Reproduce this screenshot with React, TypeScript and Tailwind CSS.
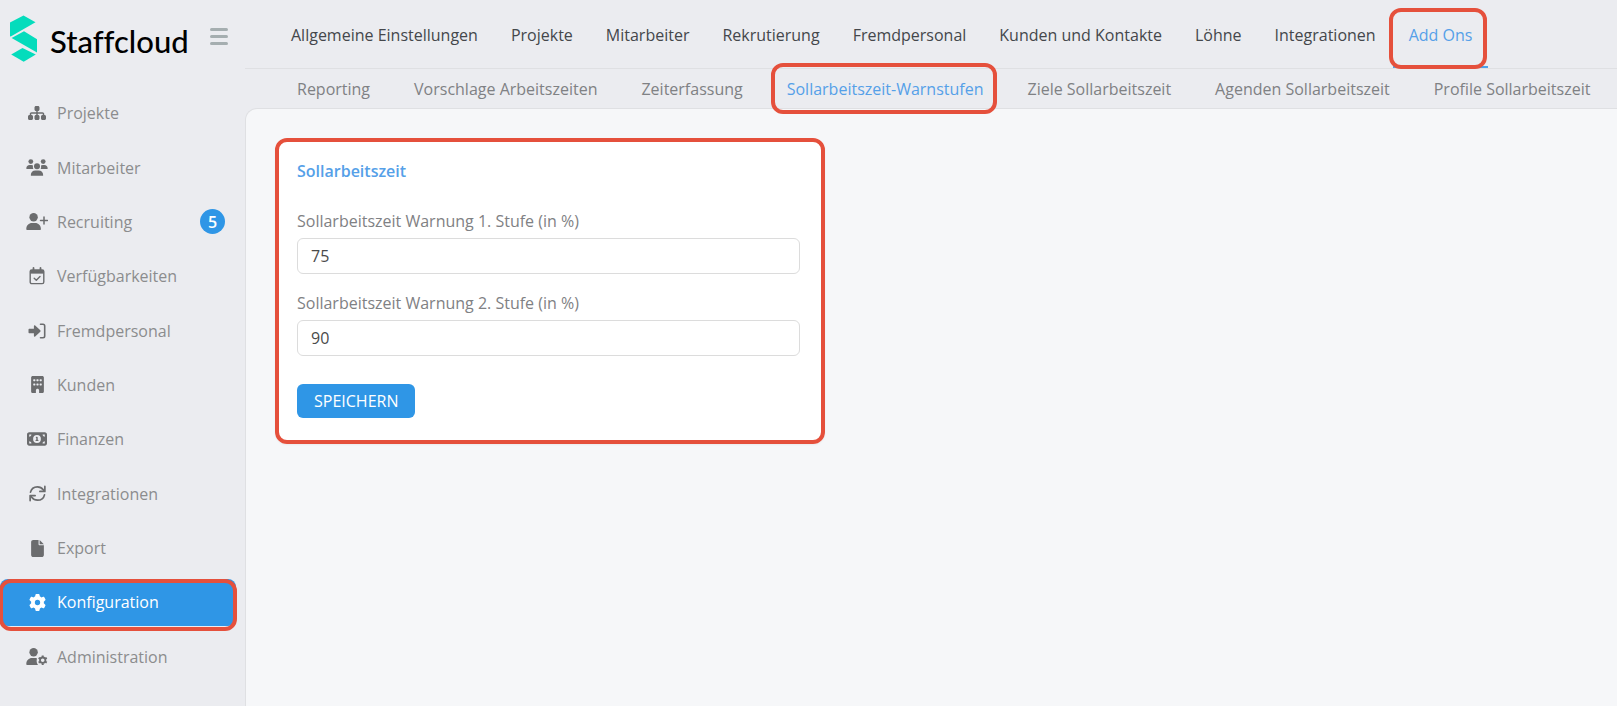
import type { ReactNode } from "react";
import type { IconType } from "react-icons";
import { FaSitemap, FaBuilding, FaMoneyBill1, FaFile, FaGear } from "react-icons/fa6";

type IconProps = { className?: string };

function UsersIcon({ className }: IconProps) {
  return (
    <svg viewBox="0 0 22 17" className={className} fill="currentColor">
      <circle cx="4.8" cy="2.600" r="2.400" />
      <circle cx="17.200" cy="2.600" r="2.400" />
      <circle cx="11" cy="7.200" r="3" />
      <path d="M.3 9.600C.3 7.400 1.700 6 3.700 6h1.600c.7 0 1.300.2 1.700.5-.3 1.100-.2 2.200.3 3.400H.7c-.3 0-.4-.1-.4-.3z" />
      <path d="M21.700 9.600c0-2.200-1.400-3.600-3.400-3.600h-1.600c-.7 0-1.300.2-1.700.5.3 1.100.2 2.200-.3 3.400h6.600c.3 0 .4-.1.4-.3z" />
      <path d="M4.800 16.200c0-2.900 1.900-4.700 4.600-4.700h3.200c2.700 0 4.600 1.800 4.600 4.700 0 .4-.3.6-.7.600h-11c-.4 0-.7-.2-.7-.6z" />
    </svg>
  );
}

function UserPlusIcon({ className }: IconProps) {
  return (
    <svg viewBox="0 0 22 17" className={className} fill="currentColor">
      <circle cx="7.600" cy="4.200" r="4.200" />
      <path d="M.3 16c0-3.500 2.500-5.900 5.800-5.900h3c3.300 0 5.800 2.400 5.800 5.900 0 .6-.4 1-1 1H1.300c-.6 0-1-.4-1-1z" />
      <path d="M18 4v7M14.500 7.500h7" stroke="currentColor" strokeWidth="1.500" strokeLinecap="round" />
    </svg>
  );
}

function UserGearIcon({ className }: IconProps) {
  return (
    <svg viewBox="0 0 22 17" className={className} fill="currentColor">
      <circle cx="7.600" cy="4.200" r="4.200" />
      <path d="M.3 16c0-3.500 2.500-5.900 5.800-5.900h3c.7 0 1.300.1 1.900.3-.7 2.400-.4 4.700 1 6.600H1.300c-.6 0-1-.4-1-1z" />
      <circle cx="16.700" cy="12.200" r="2.700" fill="none" stroke="currentColor" strokeWidth="1.800" />
      <path
        d="M16.700 7.500v1.600M16.700 15.300v1.600M12.630 9.850l1.400.8M19.370 13.750l1.400.8M12.630 14.550l1.400-.8M19.370 10.650l1.400-.8"
        stroke="currentColor"
        strokeWidth="2"
      />
    </svg>
  );
}

function CalendarIcon({ className }: IconProps) {
  return (
    <svg viewBox="0 0 16 18" className={className} fill="none" stroke="currentColor">
      <path d="M4.500 1v3M11.500 1v3" strokeWidth="1.800" strokeLinecap="round" />
      <rect x="1.200" y="3" width="13.600" height="13.600" rx="1.600" strokeWidth="1.400" />
      <path d="M1.500 3.500h13v2.600h-13z" fill="currentColor" strokeWidth="1" />
      <path d="M5.200 11.200l2.100 2L11 9.500" strokeWidth="1.400" strokeLinecap="round" strokeLinejoin="round" />
    </svg>
  );
}

function EnterIcon({ className }: IconProps) {
  return (
    <svg viewBox="0 0 18 16" className={className} fill="currentColor">
      <path d="M7.200 2.600l5.100 4.700c.4.400.4 1 0 1.400l-5.100 4.700c-.5.500-1.300.2-1.300-.5V10.200H1.500c-.6 0-1-.4-1-1V6.800c0-.6.4-1 1-1h4.400V3.100c0-.7.8-1 1.300-.5z" />
      <path
        d="M12.500 1.200H15c1 0 1.700.7 1.700 1.700v10.200c0 1-.7 1.700-1.700 1.700h-2.500"
        fill="none"
        stroke="currentColor"
        strokeWidth="1.600"
        strokeLinecap="round"
      />
    </svg>
  );
}

function SyncIcon({ className }: IconProps) {
  return (
    <svg
      viewBox="0 0 18 18"
      className={className}
      fill="none"
      stroke="currentColor"
      strokeWidth="1.800"
      strokeLinecap="round"
      strokeLinejoin="round"
    >
      <path d="M1.600 7.600C2.400 4.200 5.300 1.900 8.900 1.900c2.500 0 4.700 1.100 6.200 3.100l1 1.500" />
      <path d="M16.800 1.500v5.300h-5.300" />
      <path d="M16.400 10.400c-.8 3.400-3.700 5.700-7.300 5.700-2.500 0-4.700-1.100-6.200-3.100l-1-1.500" />
      <path d="M1.200 16.500v-5.300h5.300" />
    </svg>
  );
}

type MenuItem = {
  label: string;
  icon: IconType | typeof SyncIcon;
  size: string;
  badge?: number;
  active?: boolean;
};

const menu: MenuItem[] = [
  { label: "Projekte", icon: FaSitemap, size: "h-4 w-5" },
  { label: "Mitarbeiter", icon: UsersIcon, size: "h-[17px] w-[22px]" },
  { label: "Recruiting", icon: UserPlusIcon, size: "h-[17px] w-[22px]", badge: 5 },
  { label: "Verfügbarkeiten", icon: CalendarIcon, size: "h-[18px] w-4" },
  { label: "Fremdpersonal", icon: EnterIcon, size: "h-4 w-[18px]" },
  { label: "Kunden", icon: FaBuilding, size: "h-[17px] w-[17px]" },
  { label: "Finanzen", icon: FaMoneyBill1, size: "h-[18px] w-5" },
  { label: "Integrationen", icon: SyncIcon, size: "h-[17px] w-[17px]" },
  { label: "Export", icon: FaFile, size: "h-[17px] w-[17px]" },
  { label: "Konfiguration", icon: FaGear, size: "h-[17px] w-[17px]", active: true },
  { label: "Administration", icon: UserGearIcon, size: "h-[17px] w-[22px]" },
];

const tabs = [
  "Allgemeine Einstellungen",
  "Projekte",
  "Mitarbeiter",
  "Rekrutierung",
  "Fremdpersonal",
  "Kunden und Kontakte",
  "Löhne",
  "Integrationen",
  "Add Ons",
];

const subTabs = [
  "Reporting",
  "Vorschlage Arbeitszeiten",
  "Zeiterfassung",
  "Sollarbeitszeit-Warnstufen",
  "Ziele Sollarbeitszeit",
  "Agenden Sollarbeitszeit",
  "Profile Sollarbeitszeit",
];

// Red frame laid over the element it points out
function Marker({ className }: { className: string }) {
  return (
    <span
      className={`pointer-events-none absolute z-10 rounded-xl border-4 border-[#e5503c] ${className}`}
    />
  );
}

function Logo() {
  return (
    <a href="#" className="flex items-center gap-3">
      <svg viewBox="0 0 28 48" className="h-12 w-7" fill="#04dcbc">
        <path d="M0 7.500L13.500.6l12 6.600L1.200 21.300 0 21.500z" />
        <path d="M1.600 22.900L14 16.200l13 8v13.300z" />
        <path d="M1.200 39.500L12.500 33l13.300 6.500L13.700 46.700z" />
      </svg>
      <span className="pt-1 font-[Lato,sans-serif] text-[31px] leading-8 font-medium text-black [font-variant-ligatures:none]">
        Staffcloud
      </span>
    </a>
  );
}

function Sidebar() {
  return (
    <aside className="flex w-[245px] shrink-0 flex-col pb-[22px]">
      <div className="flex h-[86px] items-start justify-between pt-[15px] pr-[17px] pl-[10px]">
        <Logo />
        <button type="button" aria-label="Menü" className="mt-[13px] flex w-[18px] flex-col gap-1">
          <span className="h-[3px] rounded-full bg-[#a5aeb0]" />
          <span className="h-[3px] rounded-full bg-[#a5aeb0]" />
          <span className="h-[3px] rounded-full bg-[#a5aeb0]" />
        </button>
      </div>
      <ul className="grid flex-1 auto-rows-fr pr-[9px]">
        {menu.map(({ label, icon: Icon, size, badge, active }) => (
          <li key={label} className="relative flex py-1">
            <a
              href="#"
              className={`flex flex-1 items-center rounded-lg pr-[11px] pl-[26px] ${
                active ? "bg-[#2f96e6] text-white" : "text-[#8b8c8e]"
              }`}
            >
              <span
                className={`mr-[9px] flex w-[22px] justify-center ${active ? "" : "text-[#6b6c6e]"}`}
              >
                <Icon className={size} />
              </span>
              {label}
              {badge && (
                <span className="ml-auto flex size-[25px] items-center justify-center rounded-full bg-[#2f96e6] font-semibold text-white">
                  {badge}
                </span>
              )}
            </a>
            {active && <Marker className="top-1 -right-px -bottom-px -left-px" />}
          </li>
        ))}
      </ul>
    </aside>
  );
}

function Field({ id, label, value }: { id: string; label: string; value: string }) {
  return (
    <div className="mb-[19px]">
      <label htmlFor={id} className="block pb-[7px] leading-5 text-[#7f8184]">
        {label}
      </label>
      <input
        id={id}
        defaultValue={value}
        className="h-9 w-full rounded-md border border-[#dcdcdc] bg-white px-[13px] text-[#4a4a4a]"
      />
    </div>
  );
}

function Card({ title, children }: { title: string; children: ReactNode }) {
  return (
    <section className="relative w-[550px] rounded-xl bg-white pt-[21px] pr-[25px] pb-[26px] pl-[22px] shadow-xs">
      <h2 className="mb-7 leading-6 font-semibold text-[#55a0e8]">{title}</h2>
      {children}
      <Marker className="inset-0" />
    </section>
  );
}

export default function App() {
  return (
    <div className="flex min-h-screen bg-[#ebecf0] font-['Open_Sans',sans-serif] text-base">
      <Sidebar />
      <div className="flex min-w-0 flex-1 flex-col">
        <nav className="flex h-[69px] gap-px border-b border-[#dfe0e3] pl-[30px] whitespace-nowrap text-[#44474b]">
          {tabs.map((tab) => (
            <a
              key={tab}
              href="#"
              className={`relative flex items-center border-b-2 px-4 pt-1 ${
                tab === "Add Ons" ? "border-[#4ba1ea] text-[#55a0e8]" : "border-transparent"
              }`}
            >
              {tab}
              {tab === "Add Ons" && <Marker className="top-2 right-px -bottom-[3px] -left-1" />}
            </a>
          ))}
        </nav>
        <nav className="flex h-[39px] pl-[30px] whitespace-nowrap text-[#7f8184]">
          {subTabs.map((tab) => (
            <a
              key={tab}
              href="#"
              className={`relative flex items-center px-[22px] ${
                tab === "Sollarbeitszeit-Warnstufen" ? "text-[#55a0e8]" : ""
              }`}
            >
              {tab}
              {tab === "Sollarbeitszeit-Warnstufen" && (
                <Marker className="-top-[6px] right-2 -bottom-[6px] left-[6px]" />
              )}
            </a>
          ))}
        </nav>
        <main className="flex-1 rounded-tl-xl border-t border-l border-[#dfe0e3] bg-[#f6f7f9] p-[29px]">
          <Card title="Sollarbeitszeit">
            <form>
              <Field id="level1" label="Sollarbeitszeit Warnung 1. Stufe (in %)" value="75" />
              <Field id="level2" label="Sollarbeitszeit Warnung 2. Stufe (in %)" value="90" />
              <button
                type="button"
                className="mt-[9px] h-[34px] rounded-md bg-[#2f96e6] px-[17px] text-white"
              >
                SPEICHERN
              </button>
            </form>
          </Card>
        </main>
      </div>
    </div>
  );
}
